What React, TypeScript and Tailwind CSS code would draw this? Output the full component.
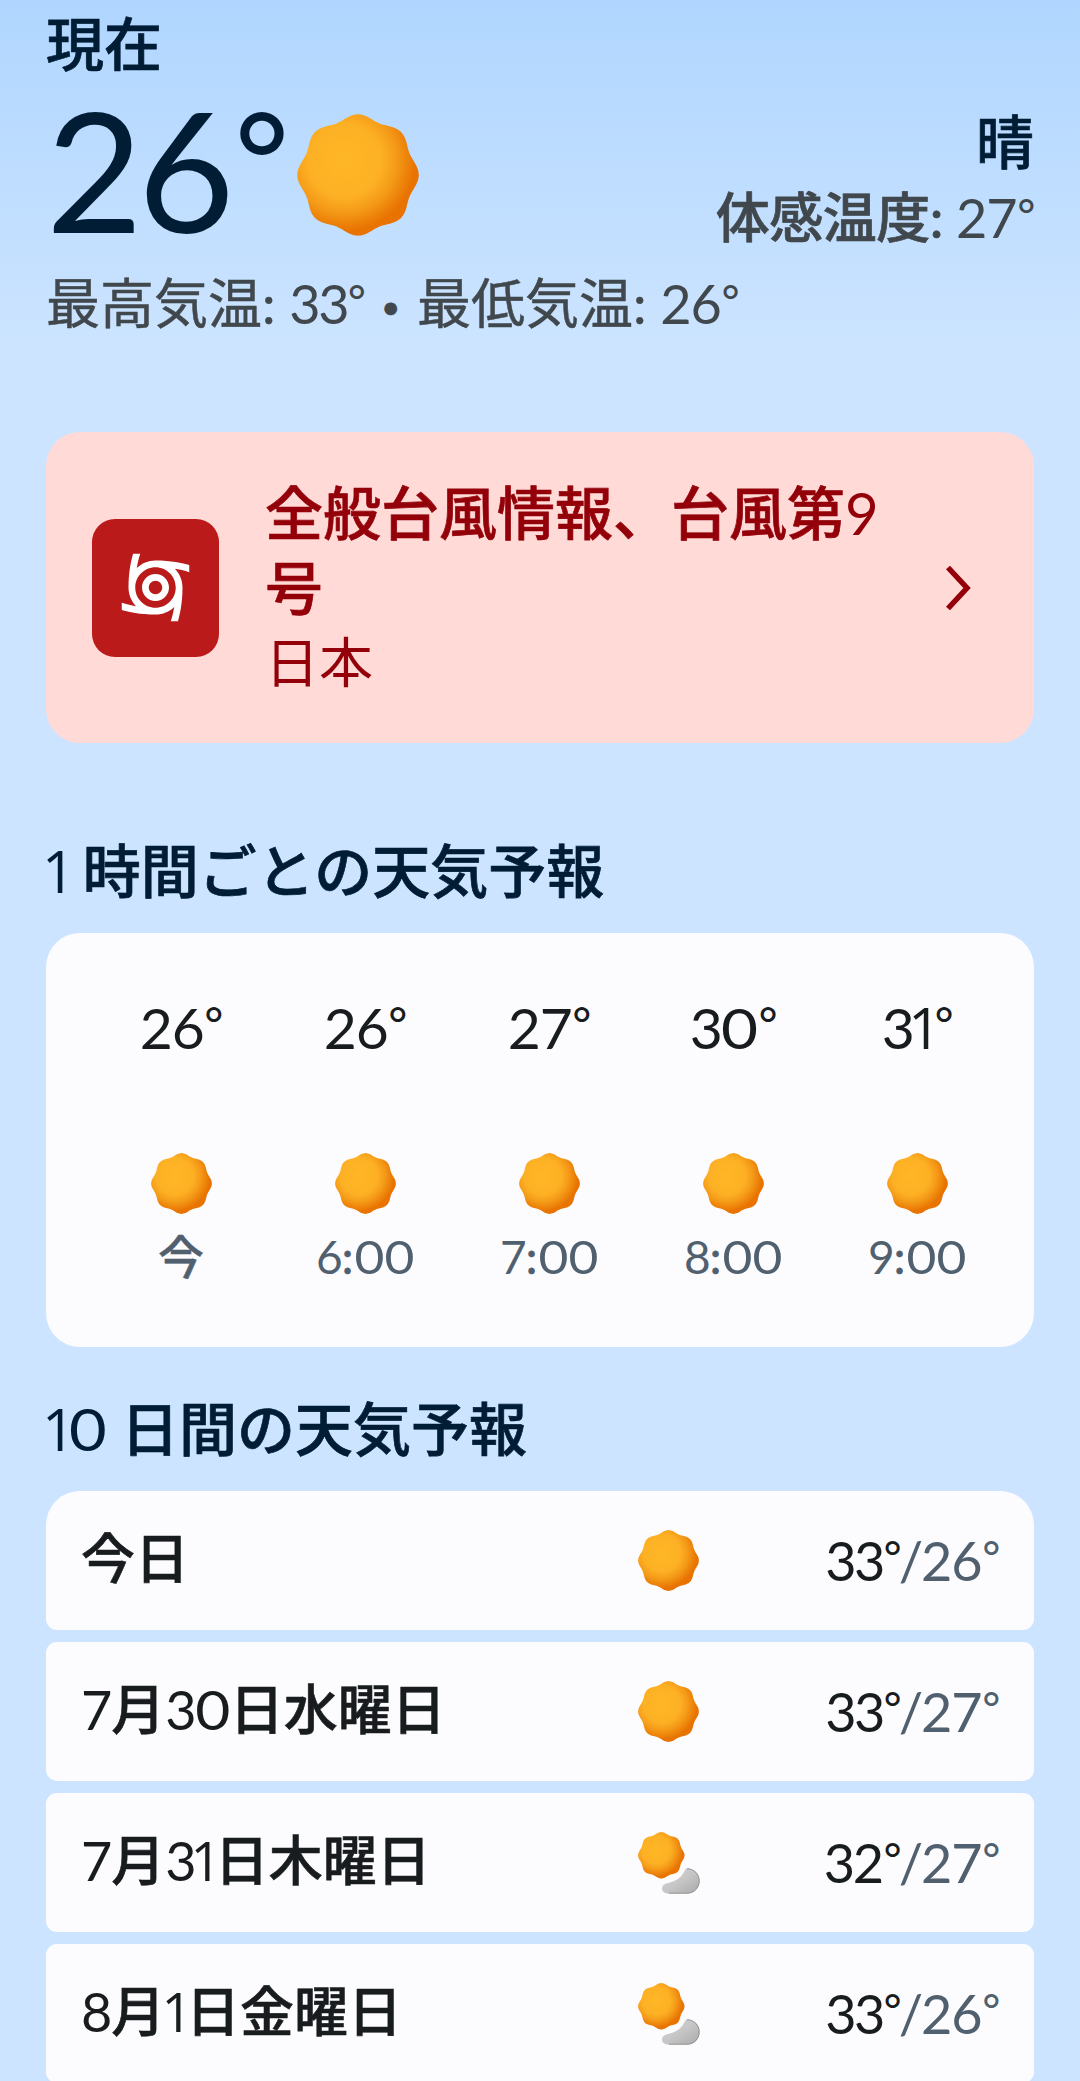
import { Fragment } from "react";
import clsx from "clsx";
import { MdCyclone } from "react-icons/md";

type Condition = "sunny" | "partly";

interface Hour {
	time: string;
	temp: string;
}

interface Day {
	label: string;
	condition: Condition;
	high: string;
	low: string;
}

const hours: Hour[] = [
	{ time: "今", temp: "26°" },
	{ time: "6:00", temp: "26°" },
	{ time: "7:00", temp: "27°" },
	{ time: "8:00", temp: "30°" },
	{ time: "9:00", temp: "31°" },
];

const days: Day[] = [
	{ label: "今日", condition: "sunny", high: "33°", low: "26°" },
	{ label: "7月30日水曜日", condition: "sunny", high: "33°", low: "27°" },
	{ label: "7月31日木曜日", condition: "partly", high: "32°", low: "27°" },
	{ label: "8月1日金曜日", condition: "partly", high: "33°", low: "26°" },
];

// Scalloped outline with eight lobes, centred on 50,50
const sunPath = (() => {
	const points: string[] = [];
	for (let i = 0; i < 180; i++) {
		const a = (i / 180) * Math.PI * 2;
		const r = 47.8 + 2 * Math.cos(a * 8);
		points.push(`${(50 + r * Math.cos(a)).toFixed(2)} ${(50 + r * Math.sin(a)).toFixed(2)}`);
	}
	return `M${points.join("L")}Z`;
})();

const Gradients = () => (
	<svg width="0" height="0" className="absolute">
		<defs>
			<radialGradient id="sun" gradientUnits="userSpaceOnUse" cx="39" cy="38" r="61">
				<stop offset="0" stopColor="#ffb726" />
				<stop offset="0.5" stopColor="#fdb024" />
				<stop offset="0.7" stopColor="#f49a18" />
				<stop offset="0.95" stopColor="#e87300" />
			</radialGradient>
			<linearGradient id="cloud" x1="0" y1="0" x2="1" y2="1">
				<stop offset="0" stopColor="#d6d6d6" />
				<stop offset="0.5" stopColor="#c6c6c6" />
				<stop offset="1" stopColor="#a9a9a9" />
			</linearGradient>
		</defs>
	</svg>
);

const Sun = ({ className }: { className: string }) => (
	<svg viewBox="0 0 100 100" className={className}>
		<path d={sunPath} fill="url(#sun)" />
	</svg>
);

const PartlyCloudy = () => (
	<svg viewBox="0 0 62 62" className="size-[62px]">
		<g transform="scale(0.466)">
			<path d={sunPath} fill="url(#sun)" />
		</g>
		<path
			d="M24 56.5C24 53.5 26 51.8 29 51.2C38 49.5 43.5 45.5 46.5 39C47.4 36.9 48.6 36.2 50.8 36.4C57 37.2 61.6 42.4 61.6 48.8C61.6 56 56.4 61.6 49 61.6H31C26.8 61.6 24 59.8 24 56.5Z"
			fill="url(#cloud)"
		/>
		<path
			d="M49 36.7C56 36.9 61.2 42.2 61.2 48.8C61.2 55.8 56 61.2 49 61.2H31"
			fill="none"
			stroke="#8f8f8f"
			strokeWidth="0.9"
		/>
	</svg>
);

// Narrow one, wide zero and a small degree ring
const glyphClass: Record<string, string> = {
	"0": "inline-block leading-none scale-x-[1.12] mx-[0.05em]",
	"1": "font-['Open_Sans'] leading-none -ml-[0.07em] -mr-[0.1em]",
	"3": "tracking-[-0.045em]",
	"/": "-ml-[0.03em] tracking-[-0.04em]",
	"°": "text-[0.79em] leading-none align-[0.19em] ml-[0.02em] font-medium",
};

const Digits = ({ text }: { text: string }) => (
	<span className="font-normal tracking-[-0.02em] [-webkit-text-stroke:0]">
		{[...text].map((char, i) =>
			glyphClass[char] ? (
				<span key={i} className={glyphClass[char]}>
					{char}
				</span>
			) : (
				<Fragment key={i}>{char}</Fragment>
			),
		)}
	</span>
);

// Digits stay at regular weight next to the heavier kanji
const Label = ({ text }: { text: string }) => (
	<>
		{text
			.split(/(\d+°?)/)
			.map((part, i) => (/^\d/.test(part) ? <Digits key={i} text={part} /> : part))}
	</>
);

const Current = () => (
	<section className="pt-1">
		<h2 className="text-[58px] leading-[80px] font-medium text-[#001d35] [-webkit-text-stroke:0.7px]">
			現在
		</h2>
		<div className="flex h-[172px] justify-between">
			<div className="flex">
				<div className="w-[251px] text-[167px] leading-[170px] tracking-[-5px] whitespace-nowrap text-[#001d35]">
					26
					<span className="ml-[5px] align-[0.19em] text-[131px] leading-none font-medium">°</span>
				</div>
				<Sun className="mt-[30px] size-[122px]" />
			</div>
			<div className="mt-5 text-right">
				<div className="text-[58px] leading-[76px] font-medium text-[#001d35] [-webkit-text-stroke:0.7px]">
					晴
				</div>
				<div className="text-[54px] leading-[76px] font-medium tracking-[-0.5px] text-[#41484d] [-webkit-text-stroke:0.7px]">
					<Label text="体感温度: 27°" />
				</div>
			</div>
		</div>
		<p className="mt-2 text-[54px] leading-[80px] text-[#41484d] [-webkit-text-stroke:0.5px]">
			<Label text="最高気温: 33° " />
			<span className="mx-[0.08em] align-[0.16em] text-[0.62em] leading-none">•</span>
			<Label text=" 最低気温: 26°" />
		</p>
	</section>
);

const Alert = () => (
	<a className="mt-[88px] flex h-[311px] items-center rounded-[34px] bg-[#ffdad6] pl-[46px] text-[#930009]">
		<div className="flex h-[138px] w-[127px] shrink-0 items-center justify-center rounded-[23px] bg-[#ba1a1a]">
			<MdCyclone className="size-[81px] text-white" />
		</div>
		<div className="ml-[46px] w-[640px]">
			<div className="text-[58px] leading-[75px] font-medium [-webkit-text-stroke:0.7px]">
				<Label text="全般台風情報、台風第9号" />
			</div>
			<div className="text-[54px] leading-[75px]">日本</div>
		</div>
		<svg viewBox="0 0 30 50" className="ml-10 h-[50px] w-[30px]" fill="none">
			<path d="M3 4.5L22 25L3 45.5" stroke="currentColor" strokeWidth="5.5" />
		</svg>
	</a>
);

const Heading = ({ text, className }: { text: string; className: string }) => (
	<h2
		className={clsx(
			"text-[58px] leading-[80px] font-medium text-[#001d35] [-webkit-text-stroke:0.7px]",
			className,
		)}
	>
		<Label text={text} />
	</h2>
);

const Hourly = () => (
	<div className="mt-[22px] flex h-[414px] rounded-[34px] bg-[#fcfcff] pt-[54px] pl-[43px]">
		{hours.map(({ time, temp }) => (
			<div key={time} className="flex w-[184px] flex-col items-center">
				<div className="text-[57px] leading-[80px] text-[#191c1e]">
					<Digits text={temp} />
				</div>
				<Sun className="mt-[86px] size-[61px]" />
				<div className="mt-[13px] text-[46px] leading-[60px] font-medium text-[#51606f] [-webkit-text-stroke:0.5px]">
					<Label text={time} />
				</div>
			</div>
		))}
	</div>
);

const Daily = () => (
	<ul className="mt-[22px] flex flex-col gap-3">
		{days.map(({ label, condition, high, low }) => (
			<li
				key={label}
				className="flex h-[139px] items-center rounded-[11px] bg-[#fcfcff] pr-[35px] pl-[35px] first:rounded-t-[34px]"
			>
				<div className="w-[557px] pb-[3px] text-[54px] leading-[80px] font-medium text-[#191c1e] [-webkit-text-stroke:0.6px]">
					<Label text={label} />
				</div>
				{condition === "sunny" ? <Sun className="size-[61px]" /> : <PartlyCloudy />}
				<div className="ml-auto text-[54px] leading-[80px] text-[#51606f]">
					<span className="text-[#191c1e]">
						<Digits text={high} />
					</span>
					<Digits text={`/${low}`} />
				</div>
			</li>
		))}
	</ul>
);

const App = () => {
	return (
		<main
			lang="ja"
			className="h-[2081px] w-[1080px] overflow-hidden bg-[#cce4ff] bg-[linear-gradient(#b0d6ff,#cce4ff_350px)] px-[46px] font-['Lato','Noto_Sans_CJK_JP',sans-serif]"
		>
			<Gradients />
			<Current />
			<Alert />
			<Heading text="1 時間ごとの天気予報" className="mt-[88px]" />
			<Hourly />
			<Heading text="10 日間の天気予報" className="mt-[42px]" />
			<Daily />
		</main>
	);
};

export default App;
